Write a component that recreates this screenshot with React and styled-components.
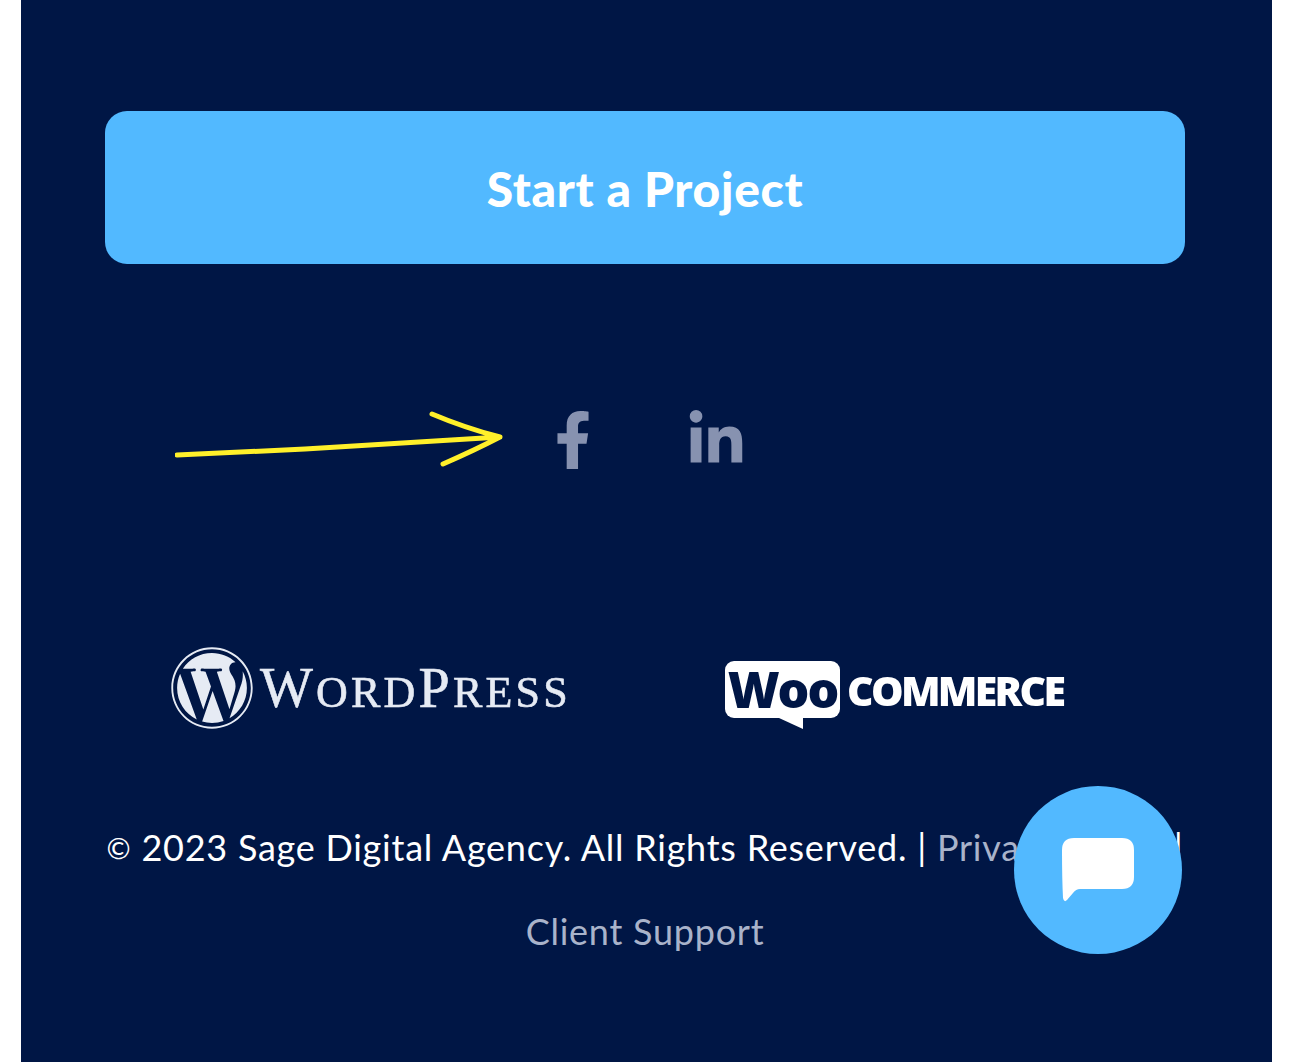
import React from "react";
import styled, { createGlobalStyle } from "styled-components";
import { FaFacebookF, FaLinkedinIn, FaWordpress } from "react-icons/fa";

const GlobalStyle = createGlobalStyle`
  html, body {
    margin: 0;
    background: #fff;
    overflow: hidden;
  }
`;

const Footer = styled.footer`
  position: relative;
  box-sizing: border-box;
  width: 1251px;
  height: 1062px;
  margin-left: 21px;
  padding: 111px 87px 0 84px;
  background-color: #001645;
  font-family: "Lato", "Noto Sans", sans-serif;
`;

const ProjectButton = styled.a`
  display: flex;
  align-items: center;
  justify-content: center;
  height: 153px;
  padding-top: 2px;
  box-sizing: border-box;
  border-radius: 22px;
  background-color: #52b9ff;
  color: #fff;
  font-size: 48px;
  font-weight: 900;
  letter-spacing: 0.7px;
`;

const SocialRow = styled.div`
  display: flex;
  align-items: center;
  gap: 84px;
  height: 60px;
  margin-top: 146px;
  padding-left: 439px;
  color: #8792b0;
  filter: blur(0.7px);
`;

const LogoRow = styled.div`
  display: flex;
  align-items: center;
  height: 90px;
  margin-top: 173px;
  padding-left: 65px;
  color: #fff;
  filter: blur(0.5px);
`;

const WordPressLogo = styled.div`
  display: flex;
  align-items: center;
  gap: 6px;
  width: 555px;
  font-family: "Liberation Serif", serif;
  color: #e6ebf4;
`;

const WordMark = styled.span`
  font-size: 44px;
  letter-spacing: 3.2px;
  text-transform: uppercase;
  -webkit-text-stroke: 0.6px #e6ebf4;
`;

const WordCap = styled.span`
  font-size: 56px;
`;

const WooLogo = styled.div`
  display: flex;
  align-items: center;
  gap: 7px;
  margin-top: 3px;
`;

const WooBubble = styled.span`
  position: relative;
  display: block;
  width: 115px;
  height: 57px;
  border-radius: 9px;
  background-color: #fff;
  color: #001645;
  font-family: "Open Sans", sans-serif;
  font-size: 50px;
  font-weight: 800;
  line-height: 57px;
  letter-spacing: -2px;
  text-align: center;

  &::after {
    content: "";
    position: absolute;
    left: 54px;
    bottom: -11px;
    border-style: solid;
    border-width: 11px 0 0 24px;
    border-color: #fff transparent transparent transparent;
  }
`;

const CommerceText = styled.span`
  font-family: "Open Sans", sans-serif;
  font-size: 41px;
  font-weight: 800;
  letter-spacing: -2.7px;
`;

const Copyright = styled.p`
  margin: 72px -20px 0;
  color: #fff;
  font-size: 36px;
  letter-spacing: 0.75px;
  line-height: 84px;
  text-align: center;
`;

const CopyMark = styled.span`
  font-size: 29px;
  line-height: 1;
  position: relative;
  top: -2px;
`;

const FooterLink = styled.a`
  color: #a9b3ca;
`;

const ArrowMark = styled.svg`
  position: absolute;
  left: 154px;
  top: 400px;
`;

const ChatButton = styled.button`
  position: absolute;
  left: 993px;
  top: 786px;
  display: flex;
  align-items: center;
  justify-content: center;
  width: 168px;
  height: 168px;
  padding: 0;
  border: 0;
  border-radius: 50%;
  background-color: #52b9ff;
`;

const App = () => (
  <>
    <GlobalStyle />
    <Footer>
      <ProjectButton>Start a Project</ProjectButton>
      <SocialRow>
        <FaFacebookF size={58} />
        <FaLinkedinIn size={60} />
      </SocialRow>
      <LogoRow>
        <WordPressLogo>
          <FaWordpress size={84} />
          <WordMark>
            <WordCap>W</WordCap>ord<WordCap>P</WordCap>ress
          </WordMark>
        </WordPressLogo>
        <WooLogo>
          <WooBubble>Woo</WooBubble>
          <CommerceText>COMMERCE</CommerceText>
        </WooLogo>
      </LogoRow>
      <Copyright>
        <CopyMark>©</CopyMark> 2023 Sage Digital Agency. All Rights Reserved. |{" "}
        <FooterLink>Privacy Policy</FooterLink> |
        <br />
        <FooterLink>Client Support</FooterLink>
      </Copyright>
      <ArrowMark width="350" height="70" viewBox="20 0 350 70" fill="none">
        <path
          d="M22 55 L150 49 L345 37 M277 14 Q310 28 345 37 Q320 50 288 64"
          stroke="#fff02a"
          strokeWidth="5"
          strokeLinecap="round"
          strokeLinejoin="round"
        />
      </ArrowMark>
      <ChatButton aria-label="Chat">
        <svg width="72" height="64" viewBox="0 0 72 64">
          <path
            d="M12 0 H60 Q72 0 72 12 V39 Q72 51 60 51 H18 Q14 51 11 55 L5 62 Q2 65 1 60 Q0 40 0 12 Q0 0 12 0 Z"
            fill="#fff"
          />
        </svg>
      </ChatButton>
    </Footer>
  </>
);

export default App;
